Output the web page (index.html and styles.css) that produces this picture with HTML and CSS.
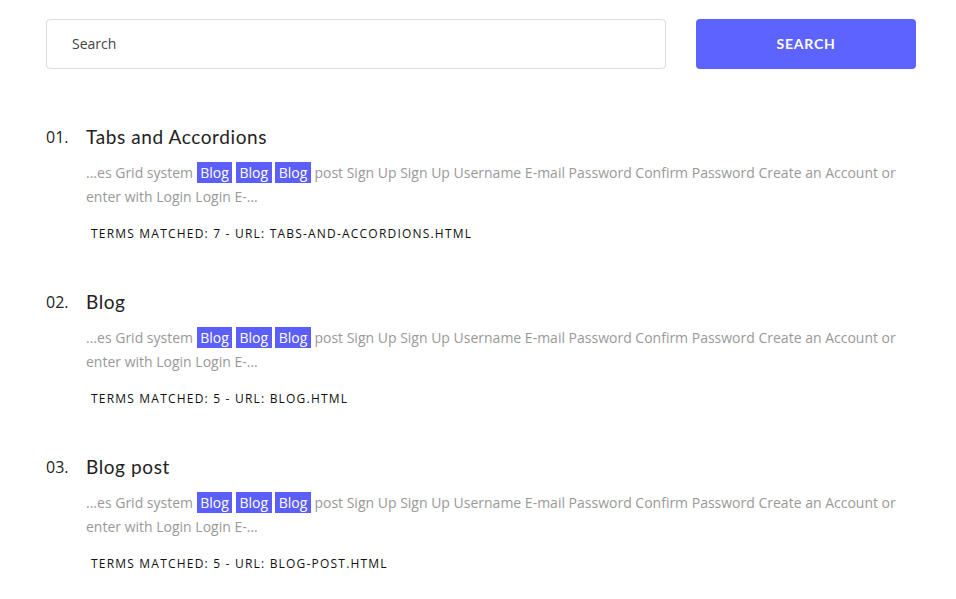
FILE: index.html
```html
<!DOCTYPE html>
<html>
<head>
<meta charset="utf-8">
<link rel="stylesheet" href="styles.css">
</head>
<body>
<div class="page">
  <form class="search-bar">
    <input class="search-input" type="text" placeholder="Search">
    <button class="search-btn" type="button">SEARCH</button>
  </form>
  <ol class="results">
    <li class="result">
      <span class="num">01.</span>
      <div class="body">
        <h3 class="title">Tabs and Accordions</h3>
        <p class="excerpt">...es Grid system <mark>Blog</mark> <mark>Blog</mark> <mark>Blog</mark> post Sign Up Sign Up Username E-mail Password Confirm Password Create an Account or enter with Login Login E-...</p>
        <div class="meta">Terms matched: 7 - URL: tabs-and-accordions.html</div>
      </div>
    </li>
    <li class="result">
      <span class="num">02.</span>
      <div class="body">
        <h3 class="title">Blog</h3>
        <p class="excerpt">...es Grid system <mark>Blog</mark> <mark>Blog</mark> <mark>Blog</mark> post Sign Up Sign Up Username E-mail Password Confirm Password Create an Account or enter with Login Login E-...</p>
        <div class="meta">Terms matched: 5 - URL: blog.html</div>
      </div>
    </li>
    <li class="result">
      <span class="num">03.</span>
      <div class="body">
        <h3 class="title">Blog post</h3>
        <p class="excerpt">...es Grid system <mark>Blog</mark> <mark>Blog</mark> <mark>Blog</mark> post Sign Up Sign Up Username E-mail Password Confirm Password Create an Account or enter with Login Login E-...</p>
        <div class="meta">Terms matched: 5 - URL: blog-post.html</div>
      </div>
    </li>
  </ol>
</div>
</body>
</html>
```

FILE: styles.css
```css
* { box-sizing: border-box; }
html, body { margin: 0; padding: 0; background: #fff; }
body { font-family: "Open Sans", "Liberation Sans", sans-serif; color: #222; }
.page { width: 870px; margin-left: 46px; padding-top: 19px; }
.search-bar { display: flex; gap: 30px; margin: 0; }
.search-input {
  flex: 1;
  height: 50px;
  border: 1px solid #dcdcdc;
  border-radius: 4px;
  padding: 0 25px 2px;
  font-family: "Open Sans", sans-serif;
  font-size: 14px;
  color: #555;
  outline: none;
}
.search-input::placeholder { color: #444; }
.search-btn {
  width: 220px;
  height: 50px;
  border: 0;
  border-radius: 4px;
  background: #5d63fe;
  color: #fff;
  font-family: Lato, "Open Sans", sans-serif;
  font-weight: 700;
  font-size: 14px;
  letter-spacing: 0.8px;
  padding: 0 0 2px;
}
.results { list-style: none; margin: 56px 0 0; padding: 0; }
.result { display: flex; margin-bottom: 47px; }
.num { width: 40px; flex: none; font-size: 16px; line-height: 24px; color: #222; }
.body { flex: 1; }
.title {
  margin: 0;
  font-family: Lato, "Open Sans", sans-serif;
  font-weight: 400;
  font-size: 19px;
  line-height: 24px;
  color: #222;
  letter-spacing: 0.6px;
}
.excerpt {
  margin: 12px 0 0;
  font-size: 14px;
  line-height: 24px;
  color: #999;
}
mark {
  background: #5b5ef8;
  color: #fff;
  padding: 1px 3.5px;
}
.meta {
  margin: 16px 0 0 5px;
  font-size: 12px;
  line-height: 18px;
  letter-spacing: 1.2px;
  text-transform: uppercase;
  color: #111;
}
```
